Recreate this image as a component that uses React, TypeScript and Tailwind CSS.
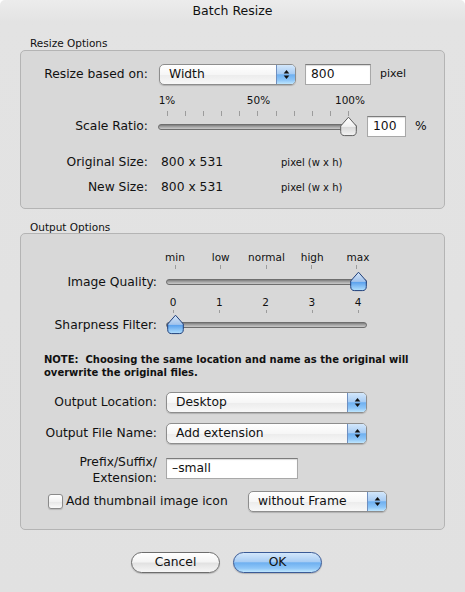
import React from 'react';

const blueGel =
  'bg-[linear-gradient(#d3e7fb,#a9cdf4_45%,#6fb0f0_52%,#8ec6f8_80%,#bfe6fd)]';

function Arrows() {
  return (
    <svg width="7" height="11" viewBox="0 0 7 11">
      <path d="M3.5 1 L6.3 4.6 L0.7 4.6 Z" fill="#111" />
      <path d="M0.7 6.4 L6.3 6.4 L3.5 10 Z" fill="#111" />
    </svg>
  );
}

function Popup({ value, className = '' }: { value: string; className?: string }) {
  return (
    <div
      className={`flex h-[21px] items-stretch rounded-[5px] border border-[#8d8d8d] bg-[linear-gradient(#ffffff,#f6f6f6_50%,#ececec_52%,#f8f8f8)] shadow-[0_1px_1px_rgba(0,0,0,0.18)] ${className}`}
    >
      <span className="flex-1 pl-[9px] leading-[19px]">{value}</span>
      <span
        className={`flex w-[19px] items-center justify-center rounded-r-[4px] border-l border-[#6f8fbf] ${blueGel}`}
      >
        <Arrows />
      </span>
    </div>
  );
}

function TextBox({ value, className = '' }: { value: string; className?: string }) {
  return (
    <div
      className={`h-[21px] border border-[#a8a8a8] border-t-[#7c7c7c] bg-white pl-[5px] leading-[19px] shadow-[inset_0_1px_1px_rgba(0,0,0,0.15)] ${className}`}
    >
      {value}
    </div>
  );
}

function Thumb({ blue }: { blue: boolean }) {
  const id = blue ? 'tb' : 'tg';
  return (
    <svg width="19" height="21" viewBox="0 0 19 21">
      <defs>
        <linearGradient id={id} x1="0" y1="0" x2="0" y2="1">
          {blue ? (
            <>
              <stop offset="0" stopColor="#d6e6f8" />
              <stop offset="0.5" stopColor="#a2c3ec" />
              <stop offset="0.56" stopColor="#5da3ee" />
              <stop offset="1" stopColor="#b3e0fd" />
            </>
          ) : (
            <>
              <stop offset="0" stopColor="#ffffff" />
              <stop offset="0.5" stopColor="#f0f0f0" />
              <stop offset="0.56" stopColor="#d9d9d9" />
              <stop offset="1" stopColor="#f4f4f4" />
            </>
          )}
        </linearGradient>
      </defs>
      <path
        d="M9.5 1.2 L17.3 10 L17.3 15.5 Q17.3 19.6 13.3 19.6 L5.7 19.6 Q1.7 19.6 1.7 15.5 L1.7 10 Z"
        fill={`url(#${id})`}
        stroke={blue ? '#1f3f7a' : '#5e5e5e'}
        strokeWidth="1"
      />
    </svg>
  );
}

function Slider({ width, frac, blue }: { width: number; frac: number; blue: boolean }) {
  const left = 9 + frac * (width - 18) - 9.5;
  return (
    <div className="relative h-[22px]" style={{ width }}>
      <div className="absolute left-0 right-0 top-[8px] h-[6px] rounded-full border border-[#6e6e6e] bg-[linear-gradient(#7d7d7d,#a9a9a9_50%,#c9c9c9)]" />
      <div className="absolute top-0" style={{ left }}>
        <Thumb blue={blue} />
      </div>
    </div>
  );
}

function Ticks({ count, className }: { count: number; className: string }) {
  return (
    <div className={`flex justify-between ${className}`}>
      {Array.from({ length: count }).map((_, i) => (
        <span key={i} className="h-full w-px bg-[#9c9c9c]" />
      ))}
    </div>
  );
}

function TickLabels({ labels, className }: { labels: string[]; className: string }) {
  return (
    <div className={`flex h-[14px] justify-between text-[10.5px] leading-[14px] ${className}`}>
      {labels.map((l) => (
        <span key={l} className="w-[40px] text-center">
          {l}
        </span>
      ))}
    </div>
  );
}

function Label({ w, children }: { w: string; children: React.ReactNode }) {
  return <span className={`${w} shrink-0 text-right`}>{children}</span>;
}

export default function App() {
  return (
    <div className="h-[592px] w-[465px] bg-white font-['DejaVu_Sans',sans-serif] text-[12.3px] text-[#111]">
      <div className="flex h-full flex-col rounded-t-[5px] bg-[linear-gradient(#ececec,#e3e3e3_22px,#e1e1e1)]">
        <div className="flex h-[22px] items-center justify-center pt-[1px] text-[12.5px]">Batch Resize</div>

        <div className="mt-[15px] h-[12px] pl-[30px] text-[10.5px] leading-[12px]">Resize Options</div>
        <div className="mx-[20px] mt-[1px] rounded-[5px] border border-[#b4b4b4] bg-[#d8d8d8] pb-[11px] pt-[13px]">
          <div className="flex h-[21px] items-center">
            <Label w="w-[127px]">Resize based on:</Label>
            <Popup value="Width" className="ml-[11px] w-[137px]" />
            <TextBox value="800" className="ml-[9px] w-[66px]" />
            <span className="ml-[9px] text-[11px]">pixel</span>
          </div>
          <TickLabels labels={['1%', '50%', '100%']} className="ml-[126px] mt-[8px] w-[223px]" />
          <Ticks count={11} className="ml-[146px] mt-[4px] h-[5px] w-[182px]" />
          <div className="flex h-[21px] items-center">
            <Label w="w-[127px]">Scale Ratio:</Label>
            <div className="ml-[10px]">
              <Slider width={199} frac={1} blue={false} />
            </div>
            <TextBox value="100" className="ml-[10px] w-[39px]" />
            <span className="ml-[9px]">%</span>
          </div>
          <div className="mt-[15px] flex h-[20px] items-center">
            <Label w="w-[127px]">Original Size:</Label>
            <span className="ml-[13px] w-[120px]">800 x 531</span>
            <span className="text-[10px]">pixel (w x h)</span>
          </div>
          <div className="mt-[5px] flex h-[20px] items-center">
            <Label w="w-[127px]">New Size:</Label>
            <span className="ml-[13px] w-[120px]">800 x 531</span>
            <span className="text-[10px]">pixel (w x h)</span>
          </div>
        </div>

        <div className="mt-[12px] h-[12px] pl-[30px] text-[10.5px] leading-[12px]">Output Options</div>
        <div className="mx-[20px] rounded-[5px] border border-[#b4b4b4] bg-[#d8d8d8] pb-[17px] pt-[16px]">
          <TickLabels labels={['min', 'low', 'normal', 'high', 'max']} className="ml-[134px] w-[223px]" />
          <Ticks count={5} className="ml-[154px] mt-[1px] h-[4px] w-[182px]" />
          <div className="mt-[2px] flex h-[22px] items-center">
            <Label w="w-[136px]">Image Quality:</Label>
            <div className="ml-[9px]">
              <Slider width={201} frac={1} blue />
            </div>
          </div>
          <TickLabels labels={['0', '1', '2', '3', '4']} className="ml-[132px] mt-[2px] w-[225px]" />
          <Ticks count={5} className="ml-[152px] mt-[1px] h-[3px] w-[186px]" />
          <div className="mt-[1px] flex h-[22px] items-center">
            <Label w="w-[136px]">Sharpness Filter:</Label>
            <div className="ml-[9px]">
              <Slider width={201} frac={0} blue />
            </div>
          </div>

          <p className="ml-[23px] mt-[17px] text-[10px] font-bold leading-[13px]">
            NOTE:&nbsp; Choosing the same location and name as the original will
            <br />
            overwrite the original files.
          </p>

          <div className="mt-[13px] flex h-[21px] items-center">
            <Label w="w-[136px]">Output Location:</Label>
            <Popup value="Desktop" className="ml-[9px] w-[201px]" />
          </div>
          <div className="mt-[10px] flex h-[21px] items-center">
            <Label w="w-[136px]">Output File Name:</Label>
            <Popup value="Add extension" className="ml-[9px] w-[201px]" />
          </div>
          <div className="mt-[10px] flex items-start">
            <Label w="w-[136px]">
              <span className="block leading-[16px]">Prefix/Suffix/</span>
              <span className="block leading-[16px]">Extension:</span>
            </Label>
            <TextBox value="–small" className="ml-[9px] mt-[4px] w-[132px]" />
          </div>
          <div className="mt-[5px] flex h-[21px] items-center">
            <span className="ml-[27px] h-[15px] w-[15px] rounded-[3px] border border-[#8a8a8a] bg-[linear-gradient(#ffffff,#f2f2f2_50%,#e6e6e6_52%,#fafafa)] shadow-[0_1px_1px_rgba(0,0,0,0.15)]" />
            <span className="ml-[3px] w-[182px]">Add thumbnail image icon</span>
            <Popup value="without Frame" className="w-[139px]" />
          </div>
        </div>

        <div className="mt-[22px] flex h-[21px] gap-[13px] pl-[131px]">
          <button className="h-[21px] w-[89px] rounded-full border border-[#6d6d6d] bg-[linear-gradient(#ffffff,#f4f4f4_45%,#e2e2e2_55%,#f6f6f6)] leading-[19px] shadow-[0_1px_1px_rgba(0,0,0,0.2)]">
            Cancel
          </button>
          <button
            className={`h-[21px] w-[89px] rounded-full border border-[#3a5a96] leading-[19px] shadow-[0_1px_1px_rgba(0,0,0,0.2)] ${blueGel}`}
          >
            OK
          </button>
        </div>
      </div>
    </div>
  );
}
